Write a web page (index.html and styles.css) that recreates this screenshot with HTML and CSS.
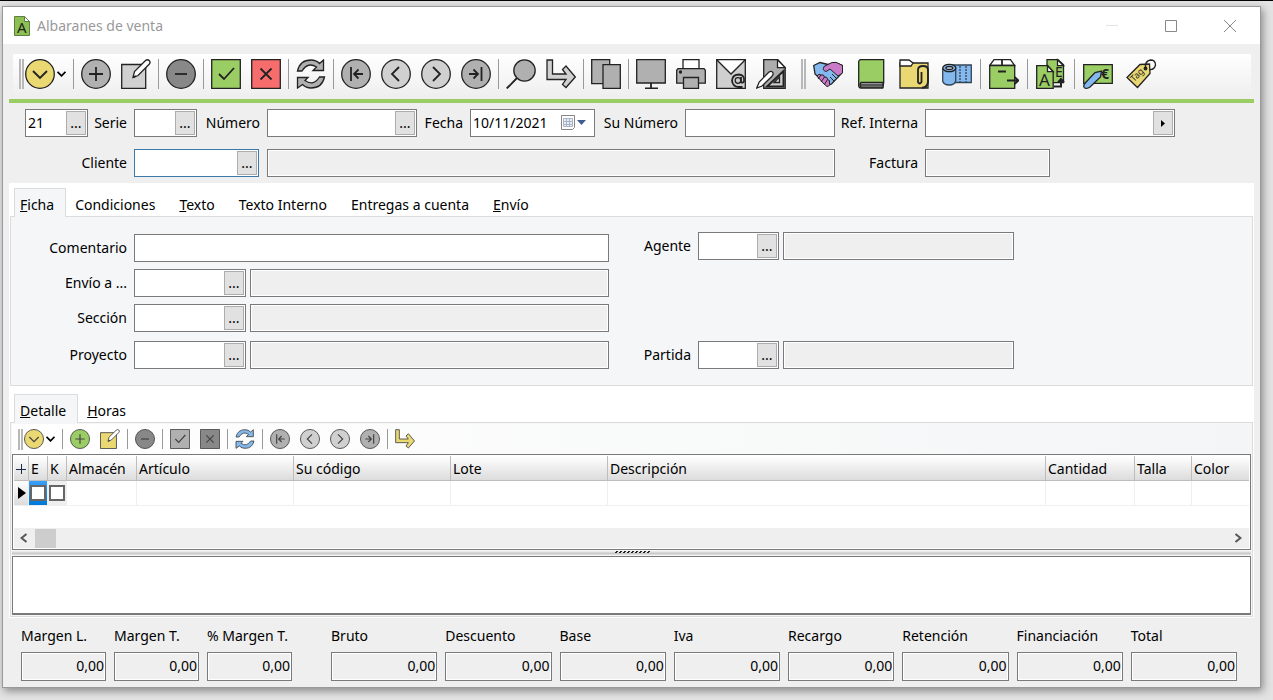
FILE: index.html
```html
<!DOCTYPE html>
<html lang="es">
<head>
<meta charset="utf-8">
<title>Albaranes de venta</title>
<link rel="stylesheet" href="styles.css">
</head>
<body>
<svg class="defs" aria-hidden="true">
  <symbol id="i-menu" viewBox="0 0 30 30"><circle class="f" cx="15" cy="15" r="14.3"/><path class="n" d="M8 12l7 7 7-7"/></symbol>
  <symbol id="i-plus" viewBox="0 0 30 30"><circle class="f" cx="15" cy="15" r="14.3"/><path class="n" d="M8 15h14M15 8v14"/></symbol>
  <symbol id="i-minus" viewBox="0 0 30 30"><circle class="f" cx="15" cy="15" r="14.3"/><path class="n" d="M9 15h12"/></symbol>
  <symbol id="i-edit" viewBox="0 0 30 30"><path class="f" d="M.7 5.500h24v23.800H.7z"/><path d="M12 18.500l1.500-6L24.500 1.500q2-1.500 3.700 0 1.700 1.800 0 3.800L17 16.500z" fill="#fff"/><path class="n" d="M12 18.500l3-1.500"/></symbol>
  <symbol id="i-check" viewBox="0 0 30 30"><path class="f" d="M.7.7h28.600v28.600H.7z"/><path class="n" d="M8 15l5 5 10-11"/></symbol>
  <symbol id="i-x" viewBox="0 0 30 30"><path class="f" d="M.7.7h28.600v28.600H.7z"/><path class="n" d="M9.500 9.500l11 11M20.500 9.500l-11 11"/></symbol>
  <symbol id="i-refresh" viewBox="0 0 30 30"><path class="f" d="M1.500 12Q4 1 15 1q5 0 8.500 3.500L27.500 1v10.500H17L20.500 8Q12 2.500 6 12z"/><path class="f" d="M28.500 18Q26 29 15 29q-5 0-8.500-3.500L1.500 29V18.500H12L9 21.500q8.500 6 14.500-3.500z"/></symbol>
  <symbol id="i-first" viewBox="0 0 30 30"><circle class="f" cx="15" cy="15" r="14.3"/><path class="n" d="M10 8v14M22 15h-9M17.500 10.500L13 15l4.500 4.500"/></symbol>
  <symbol id="i-prev" viewBox="0 0 30 30"><circle class="f" cx="15" cy="15" r="14.3"/><path class="n" d="M18 8l-7 7 7 7"/></symbol>
  <symbol id="i-next" viewBox="0 0 30 30"><circle class="f" cx="15" cy="15" r="14.3"/><path class="n" d="M12 8l7 7-7 7"/></symbol>
  <symbol id="i-last" viewBox="0 0 30 30"><circle class="f" cx="15" cy="15" r="14.3"/><path class="n" d="M20.500 8v14M8 15h9M12.500 10.500L17 15l-4.500 4.500"/></symbol>
  <symbol id="i-search" viewBox="0 0 30 30"><path class="n" d="M.7 29.500L11 19"/><circle class="f" cx="18.500" cy="11.500" r="10.700"/></symbol>
  <symbol id="i-goto" viewBox="0 0 30 30"><path class="f" d="M1 1h5.500v14H20l-3.500-4.500L20 7l9.300 11L20 28.500l-3.500-3L20 20.500H1z"/></symbol>
  <symbol id="i-copy" viewBox="0 0 30 30"><path class="f" d="M.7.700h18v24H.7z"/><path class="f" d="M12 5.700h17.300v23.600H12z"/></symbol>
  <symbol id="i-screen" viewBox="0 0 30 30"><path class="f" d="M.7.700h28.600V24H.7z"/><path class="n" d="M15 24v5.300M9 29.300h13"/></symbol>
  <symbol id="i-print" viewBox="0 0 30 30"><path d="M7 .7h16V11H7z" fill="#fff"/><path class="f" d="M2 9.700h26l1.300 1.500v13H.7v-13z"/><path class="f" d="M7.500 18.500h15v10.800h-15z"/><circle cx="4.500" cy="13" r="1"/></symbol>
  <symbol id="i-mail" viewBox="0 0 30 30"><path d="M.7.700h28.600v28.600H.7z" fill="#cfcfcf"/><path d="M.7.700L15 15 29.300.7z" fill="#fff"/><circle cx="22" cy="21.500" r="2.800" fill="none"/><path class="n" d="M25 18v5q1.500 1.500 3-.5Q29 16 23 15.500q-6.500 0-7 6 .5 6 6.500 6.500h4"/></symbol>
  <symbol id="i-design" viewBox="0 0 30 30"><path d="M7.700.7h14l7.500 8v20.600H7.700z" fill="#acacac"/><path d="M21.500.7v8h7.800z" fill="#fff"/><path d="M11 27.500h16.500V12z" fill="#ccc" stroke-width="2"/><path d="M18 23.500h5.500V18z" fill="#ddd"/><path d="M.7 29l2.500-6L13 13q2.500-1.500 3.800.5 1 2-1 4L6 27z" fill="#fff"/></symbol>
  <symbol id="i-hands" viewBox="0 0 30 30"><path d="M.7 6.500L7 3.500l8 2 7-2 7.500 3-1 8-10 10.500-4 1.500L2 15z" fill="#84b9ef"/><path d="M11 7.500l8-4h4.500l6 3v7.500l-4.500 3-8-7-4 2.500q-4-1-2-5zM4 17q2-3 4-1 3-1 3.500 2 3-.5 3 2.500 3 .5 2 3.500 1 3-2.500 3.500L10 24z" fill="#c97bc9" stroke-width="1"/><path d="M5 20l3-4M8 23l3.500-5M11.500 25.500l3-5M19 15l5 5M17 18l4 4" fill="none" stroke-width="1"/></symbol>
  <symbol id="i-book" viewBox="0 0 30 30"><path d="M2.700 27V3q0-2.500 3-2.500h22v23l-1 5.500H5q-2.300 0-2.300-2.500z" fill="#9bcd65"/><path d="M5 23.500h22v4.700H5q-2-2 0-4.700z" fill="#bbb"/><path d="M5 26h22" fill="none"/></symbol>
  <symbol id="i-folder" viewBox="0 0 30 30"><path d="M1 4h28v25H1z" fill="#ead873"/><path d="M1 1h9l4 3-2 3H1z" fill="#fff"/><path class="n" d="M22.500 13v10q-2 3-3.500 0V11q0-4 5-4 5 0 5 4v12q-1 6-6 5.500"/></symbol>
  <symbol id="i-roll" viewBox="0 0 30 30"><path d="M9 6h20.300v17.500H12z" fill="#84b9ef" stroke="#345"/><path d="M.7 9.500V22q1 4 6.500 4t6.500-4V9.500z" fill="#84b9ef" stroke="#345"/><ellipse cx="7.300" cy="9" rx="6.500" ry="3.700" fill="#84b9ef"/><ellipse cx="7.300" cy="9" rx="3.500" ry="1.500" fill="#dde"/><path d="M18 7v16M24 7v16" fill="none" stroke="#345" stroke-dasharray="2 1"/></symbol>
  <symbol id="i-box" viewBox="0 0 30 30"><path d="M.7 6.500L5 .7h16.500l4.200 5.800z" fill="#fff"/><path d="M.7 6.500h25v22.800H.7z" fill="#9bcd65"/><path class="n" d="M13 .7v5.800M9 12.500h8M18 21.500h11M25.500 18l4 3.500-4 3.500"/></symbol>
  <symbol id="i-drop" viewBox="0 0 9 6"><path class="n" d="M.5.800l4 4 4-4"/></symbol>
</svg>

<main class="window">
  <header class="titlebar">
    <svg class="doc" viewBox="0 0 16 20"><path d="M.5.500h10l5 5v14H.5z" fill="#8cc152" stroke="#5f7d45"/><path d="M10.500.500v5h5z" fill="#fff" stroke="#5f7d45"/><text x="3" y="17" font-size="15">A</text></svg>
    <h1>Albaranes de venta</h1>
    <div class="controls">
      <button class="plain" aria-label="Minimizar"><svg viewBox="0 0 14 14"><path d="M1 6.500h12" stroke="#e2e2e2" fill="none"/></svg></button>
      <button class="plain" aria-label="Maximizar"><svg viewBox="0 0 14 14"><path d="M1.500 1.500h11v11h-11z" stroke="#888" fill="none"/></svg></button>
      <button class="plain" aria-label="Cerrar"><svg viewBox="0 0 14 14"><path d="M1 1l12 12M13 1L1 13" stroke="#888" fill="none"/></svg></button>
    </div>
  </header>

  <div class="toolbar" role="toolbar" aria-label="Principal">
    <span class="grip"></span>
    <button class="tool yellow" aria-label="Menú"><svg><use href="#i-menu"/></svg></button>
    <button class="drop" aria-label="Opciones"><svg><use href="#i-drop"/></svg></button>
    <span class="sep"></span>
    <button class="tool mid" aria-label="Nuevo"><svg><use href="#i-plus"/></svg></button>
    <button class="tool light" aria-label="Editar"><svg><use href="#i-edit"/></svg></button>
    <span class="sep"></span>
    <button class="tool dark" aria-label="Borrar"><svg><use href="#i-minus"/></svg></button>
    <span class="sep"></span>
    <button class="tool green" aria-label="Aceptar"><svg><use href="#i-check"/></svg></button>
    <button class="tool red" aria-label="Cancelar"><svg><use href="#i-x"/></svg></button>
    <span class="sep"></span>
    <button class="tool mid" aria-label="Refrescar"><svg><use href="#i-refresh"/></svg></button>
    <span class="sep"></span>
    <button class="tool mid" aria-label="Primero"><svg><use href="#i-first"/></svg></button>
    <button class="tool light" aria-label="Anterior"><svg><use href="#i-prev"/></svg></button>
    <button class="tool light" aria-label="Siguiente"><svg><use href="#i-next"/></svg></button>
    <button class="tool mid" aria-label="Último"><svg><use href="#i-last"/></svg></button>
    <span class="sep"></span>
    <button class="tool mid" aria-label="Buscar"><svg><use href="#i-search"/></svg></button>
    <button class="tool light" aria-label="Ir a"><svg><use href="#i-goto"/></svg></button>
    <span class="sep"></span>
    <button class="tool mid" aria-label="Duplicar"><svg><use href="#i-copy"/></svg></button>
    <span class="sep"></span>
    <button class="tool mid" aria-label="Pantalla"><svg><use href="#i-screen"/></svg></button>
    <button class="tool mid" aria-label="Imprimir"><svg><use href="#i-print"/></svg></button>
    <button class="tool" aria-label="Enviar por correo"><svg><use href="#i-mail"/></svg></button>
    <button class="tool" aria-label="Diseñar"><svg><use href="#i-design"/></svg></button>
    <div class="toolgroup">
      <span class="grip"></span>
      <button class="tool" aria-label="Acuerdos"><svg><use href="#i-hands"/></svg></button>
      <button class="tool" aria-label="Libro"><svg><use href="#i-book"/></svg></button>
      <button class="tool" aria-label="Adjuntos"><svg><use href="#i-folder"/></svg></button>
      <button class="tool" aria-label="Trazabilidad"><svg><use href="#i-roll"/></svg></button>
      <span class="sep"></span>
      <button class="tool" aria-label="Servir"><svg><use href="#i-box"/></svg></button>
      <span class="sep"></span>
      <button class="tool" aria-label="Facturar"><svg class="ink" viewBox="0 0 30 30"><path d="M11 .7h11l5.500 5v18H11z" fill="#9bcd65"/><path d="M21.500.7v6h6z" fill="#fff"/><text x="19" y="18" font-size="14">E</text><path d="M.7 6.700h11l5.500 6v16.600H.7z" fill="#9bcd65"/><path d="M11.500 6.700v6h5.700z" fill="#fff"/><text x="3" y="27" font-size="17">A</text><path d="M18 27.500h7V21M22 23.500l3-3.500 3 3.500" fill="none" stroke-width="2"/></svg></button>
      <span class="sep"></span>
      <button class="tool" aria-label="Cobros"><svg class="ink" viewBox="0 0 30 30"><path d="M.7 5.700h28.600v18.600H.7z" fill="#9bcd65"/><text x="18" y="20" font-size="14" font-weight="700">€</text><path d="M.7 27.500q0-2 1.500-3.500L12 13.500l6.500-1.500-1 6L7 28q-2 1.500-4 1.300-2 0-2.300-1.800z" fill="#84b9ef"/></svg></button>
      <button class="tool" aria-label="Etiquetas"><svg class="ink" viewBox="0 0 30 30"><path d="M1 18.500L14 5.500l9.500-.5.500 9.500L11.500 28.500z" fill="#ead873"/><path d="M19.500 9.500q-1-7.500 5-8.500 5 0 5 5-1 5-6 4.500" fill="none"/><circle cx="19.500" cy="9.500" r="1.300" fill="#222"/><text transform="rotate(-45 9 23)" x="8" y="22.500" font-size="9">Tag</text></svg></button>
    </div>
  </div>

  <form class="head">
    <div class="row row-doc">
      <span class="field"><input aria-label="Ejercicio" value="21"><button type="button" class="pick" aria-label="Elegir ejercicio">...</button></span>
      <label for="serie">Serie</label>
      <span class="field"><input id="serie"><button type="button" class="pick" aria-label="Elegir serie">...</button></span>
      <label for="numero">Número</label>
      <span class="field"><input id="numero"><button type="button" class="pick" aria-label="Elegir número">...</button></span>
      <label for="fecha">Fecha</label>
      <span class="field"><input id="fecha" value="10/11/2021"><button type="button" class="cal" aria-label="Calendario"><svg viewBox="0 0 26 16"><path d="M.5.500h13v12l-2 2H.5z" fill="#fff" stroke="#8a8585"/><path d="M2.500 3.500h9v8h-9zM5.500 3.500v8M8.500 3.500v8M2.500 6.500h9M2.500 9.500h9" fill="#e6eef8" stroke="#a9b4c4"/><path d="M16 5h9l-4.500 5z" fill="#3f5c8c"/></svg></button></span>
      <label for="sunumero">Su Número</label>
      <span class="field"><input id="sunumero"></span>
      <label for="ref">Ref. Interna</label>
      <span class="field"><input id="ref"><button type="button" class="pick" aria-label="Ver referencia"><svg class="tri" viewBox="0 0 4 7"><path d="M0 0l4 3.500L0 7z"/></svg></button></span>
    </div>
    <div class="row row-client">
      <label for="cliente">Cliente</label>
      <span class="field focus"><input id="cliente"><button type="button" class="pick" aria-label="Elegir cliente">...</button></span>
      <span class="field ro wide"><input readonly aria-label="Nombre del cliente"></span>
      <label for="factura">Factura</label>
      <span class="field ro"><input id="factura" readonly></span>
    </div>
  </form>

  <div class="pages">
    <div class="tabs" role="tablist">
      <button class="tab active" role="tab"><u>F</u>icha</button>
      <button class="tab" role="tab">Condiciones</button>
      <button class="tab" role="tab"><u>T</u>exto</button>
      <button class="tab" role="tab">Texto Interno</button>
      <button class="tab" role="tab">Entregas a cuenta</button>
      <button class="tab" role="tab"><u>E</u>nvío</button>
    </div>
    <section class="page ficha">
      <div class="col-left">
        <div class="line"><label for="comentario">Comentario</label><span class="field wide"><input id="comentario"></span></div>
        <div class="line"><label for="envio">Envío a ...</label><span class="field code"><input id="envio"><button type="button" class="pick" aria-label="Elegir envío">...</button></span><span class="field ro wide"><input readonly aria-label="Descripción del envío"></span></div>
        <div class="line"><label for="seccion">Sección</label><span class="field code"><input id="seccion"><button type="button" class="pick" aria-label="Elegir sección">...</button></span><span class="field ro wide"><input readonly aria-label="Descripción de la sección"></span></div>
        <div class="line"><label for="proyecto">Proyecto</label><span class="field code"><input id="proyecto"><button type="button" class="pick" aria-label="Elegir proyecto">...</button></span><span class="field ro wide"><input readonly aria-label="Descripción del proyecto"></span></div>
      </div>
      <div class="col-right">
        <div class="line"><label for="agente">Agente</label><span class="field code"><input id="agente"><button type="button" class="pick" aria-label="Elegir agente">...</button></span><span class="field ro wide"><input readonly aria-label="Nombre del agente"></span></div>
        <div class="line"><label for="partida">Partida</label><span class="field code"><input id="partida"><button type="button" class="pick" aria-label="Elegir partida">...</button></span><span class="field ro wide"><input readonly aria-label="Descripción de la partida"></span></div>
      </div>
    </section>

    <div class="tabs" role="tablist">
      <button class="tab active" role="tab"><u>D</u>etalle</button>
      <button class="tab" role="tab"><u>H</u>oras</button>
    </div>
    <section class="page detail">
      <div class="toolbar small" role="toolbar" aria-label="Detalle">
        <span class="grip"></span>
        <button class="tool yellow" aria-label="Menú"><svg><use href="#i-menu"/></svg></button>
        <button class="drop" aria-label="Opciones"><svg><use href="#i-drop"/></svg></button>
        <span class="sep"></span>
        <button class="tool green" aria-label="Nueva línea"><svg><use href="#i-plus"/></svg></button>
        <button class="tool yellow" aria-label="Editar línea"><svg><use href="#i-edit"/></svg></button>
        <span class="sep"></span>
        <button class="tool dark" aria-label="Borrar línea"><svg><use href="#i-minus"/></svg></button>
        <span class="sep"></span>
        <button class="tool mid" aria-label="Aceptar línea"><svg><use href="#i-check"/></svg></button>
        <button class="tool dark" aria-label="Cancelar línea"><svg><use href="#i-x"/></svg></button>
        <span class="sep"></span>
        <button class="tool blue" aria-label="Refrescar líneas"><svg><use href="#i-refresh"/></svg></button>
        <span class="sep"></span>
        <button class="tool mid" aria-label="Primera línea"><svg><use href="#i-first"/></svg></button>
        <button class="tool light" aria-label="Línea anterior"><svg><use href="#i-prev"/></svg></button>
        <button class="tool light" aria-label="Línea siguiente"><svg><use href="#i-next"/></svg></button>
        <button class="tool mid" aria-label="Última línea"><svg><use href="#i-last"/></svg></button>
        <span class="sep"></span>
        <button class="tool yellow" aria-label="Ir a línea"><svg><use href="#i-goto"/></svg></button>
      </div>

      <div class="grid">
        <table>
          <colgroup><col class="c-mark"><col class="c-flag"><col class="c-flag"><col class="c-store"><col class="c-text"><col class="c-text"><col class="c-text"><col><col class="c-qty"><col class="c-attr"><col class="c-attr"></colgroup>
          <thead><tr>
            <th class="mark"><svg viewBox="0 0 10 10"><path d="M0 5.500h10M5.500 0v10" stroke="#1b2a44" fill="none"/></svg></th>
            <th>E</th><th>K</th><th>Almacén</th><th>Artículo</th><th>Su código</th><th>Lote</th><th>Descripción</th><th>Cantidad</th><th>Talla</th><th>Color</th>
          </tr></thead>
          <tbody><tr>
            <td class="mark current"><svg viewBox="0 0 8 12"><path d="M0 0l8 6-8 6z"/></svg></td>
            <td class="flag sel"><input type="checkbox" aria-label="E"></td>
            <td class="flag"><input type="checkbox" aria-label="K"></td>
            <td></td><td></td><td></td><td></td><td></td><td></td><td></td><td></td>
          </tr></tbody>
        </table>
        <div class="scroll">
          <button class="arrow" aria-label="Izquierda"><svg viewBox="0 0 8 10"><path d="M6.500 1l-5 4 5 4" stroke="#555" stroke-width="2" fill="none"/></svg></button>
          <span class="thumb"></span>
          <button class="arrow end" aria-label="Derecha"><svg viewBox="0 0 8 10"><path d="M1.500 1l5 4-5 4" stroke="#555" stroke-width="2" fill="none"/></svg></button>
        </div>
      </div>
      <div class="splitter"><svg viewBox="0 0 36 4"><path d="M1 2.500h35M2 1.500h34" stroke="#222" stroke-dasharray="2 2" fill="none"/></svg></div>
      <textarea class="memo" aria-label="Notas"></textarea>
    </section>
  </div>

  <footer class="totals">
    <label>Margen L.<input readonly value="0,00"></label>
    <label>Margen T.<input readonly value="0,00"></label>
    <label>% Margen T.<input readonly value="0,00"></label>
    <span></span>
    <label>Bruto<input readonly value="0,00"></label>
    <label>Descuento<input readonly value="0,00"></label>
    <label>Base<input readonly value="0,00"></label>
    <label>Iva<input readonly value="0,00"></label>
    <label>Recargo<input readonly value="0,00"></label>
    <label>Retención<input readonly value="0,00"></label>
    <label>Financiación<input readonly value="0,00"></label>
    <label>Total<input readonly value="0,00"></label>
  </footer>
</main>
</body>
</html>
```
FILE: styles.css
```css
* { box-sizing: border-box; }
body {
  margin: 0;
  padding: 5px 12px 11px 2px;
  min-height: 100vh;
  border-top: 1px solid #000;
  background: #e4e3e4;
  color: #000;
  font: 14px/20px "Noto Sans", "Open Sans", sans-serif;
}
button, input, textarea { font: inherit; color: inherit; margin: 0; padding: 0; border: 0; background: none; border-radius: 0; }
input, textarea { outline: 0; min-width: 0; }
svg { display: block; }
.defs { position: absolute; width: 0; height: 0; }
symbol, .ink { stroke: var(--line, #222); stroke-width: 1.3; overflow: visible; }
svg text { fill: #222; stroke: none; font-family: "Noto Sans", sans-serif; }
.f { fill: var(--fill, #b3b3b3); }
.n { fill: none; stroke-width: 1.8; }

.window {
  border: 1px solid #999;
  background: #efefef;
  box-shadow: 2px 3px 8px #0006;
}
.titlebar { display: flex; align-items: center; height: 37px; padding-left: 11px; background: #fff; }
.doc { width: 16px; height: 20px; }
.titlebar h1 { margin: 0 0 0 7px; font-size: 14px; font-weight: 400; color: #999; }
.controls { display: flex; gap: 44px; margin-left: auto; padding-right: 22px; }
.controls svg { width: 14px; height: 14px; }
.controls .plain { width: 15px; }

.toolbar {
  display: flex;
  align-items: center;
  height: 42px;
  margin: 10px 9px 3px 10px;
  padding: 0 0 2px 6px;
  background: linear-gradient(#fff, #efefef);
}
.tool { flex: none; width: 30px; height: 30px; }
.tool svg { width: 100%; height: 100%; }
.tool + .tool { margin-left: 10px; }
.sep { flex: none; width: 1px; height: 30px; margin: 0 7px; background: #999; }
.grip { flex: none; width: 5px; height: 30px; margin-right: 1px; border: solid #b8b8b8; border-width: 0 2px; }
.drop { --line: #000; width: 9px; margin-left: 2px; }
.drop svg { width: 9px; height: 6px; }
.toolgroup { display: flex; align-items: center; margin-left: 15px; }
.toolgroup .grip { margin-right: 7px; }
.toolgroup .tool + .tool { margin-left: 13px; }
.toolgroup .sep { margin: 0 8px; }
.yellow { --fill: #ead873; }
.mid { --fill: #b0b0b0; }
.light { --fill: #d0d0d0; }
.dark { --fill: #888; }
.green { --fill: #9bcd65; }
.red { --fill: #f76c6c; }
.blue { --fill: #84b9ef; }

.head { margin: 0 6px; padding: 6px 79px 6px 16px; border-top: 4px solid #9bcd65; }
.row { display: grid; align-items: center; }
.row-doc { grid-template-columns: 63px 46px 63px 70px minmax(0, 3fr) 53px 125px 90px minmax(0, 3fr) 90px minmax(0, 5fr); }
.row-client { grid-template-columns: 109px 125px minmax(0, 1fr) 90px 250px; margin-top: 12px; }
.row-client .wide { margin-left: 8px; }
.row-client .field:last-child { width: 125px; }
.row label, .line label { text-align: right; padding-right: 7px; white-space: nowrap; }
.field { display: flex; height: 28px; padding: 1px; border: 1px solid #7a7a7a; background: #fff; }
.field input { flex: 1; width: 0; padding-left: 1px; }
.field.focus { border-color: #3c78a8; }
.ro input { background: #efefef; }
.pick { display: flex; align-items: center; justify-content: center; width: 20px; border: 1px solid #adadad; background: #e1e1e1; }
.tri { width: 4px; height: 7px; }
.cal { width: 32px; }
.cal svg { width: 26px; height: 16px; }

.pages { margin: 0 6px; padding: 5px 1px 1px; background: #fff; }
.tabs { display: flex; padding-left: 4px; height: 28px; }
.tab { height: 28px; padding: 5px 12px 0; white-space: nowrap; }
.tab.active { height: 29px; padding: 4px 11px 0 5px; margin-right: -3px; border: 1px solid #dcdcdc; border-bottom: 0; background: #f4f6f8; z-index: 1; }
.page { border: 1px solid #dcdcdc; background: #f4f6f8; }
.ficha { display: grid; grid-template-columns: 598px minmax(0, 405px); padding: 15px 0 16px; margin-bottom: 8px; }
.line { display: flex; align-items: center; }
.line .wide { flex: 1; min-width: 0; }
.code + .wide { margin-left: 4px; }
.col-left { display: grid; gap: 7px; padding-top: 2px; }
.col-left .line:last-child { padding-top: 2px; }
.col-left label { width: 123px; }
.col-left .code { width: 112px; }
.col-right { display: flex; flex-direction: column; justify-content: space-between; }
.col-right label { width: 89px; }
.col-right .code { width: 81px; }

.detail { padding: 1px; }
.toolbar.small { height: 30px; margin: 0; padding: 0 0 0 6px; background: linear-gradient(90deg, #fff, #f4f5f6); }
.small .tool { --line: #444; width: 20px; height: 20px; }
.small .sep { height: 20px; }
.small .grip { height: 21px; }
.grid { padding: 1px; border: 1px solid #7a7a7a; background: #fff; }
table { width: 100%; table-layout: fixed; border-collapse: separate; border-spacing: 0; }
th, td { height: 25px; padding: 0 0 0 2px; border-right: 1px solid #efefef; border-bottom: 1px solid #efefef; text-align: left; font-weight: 400; white-space: nowrap; }
th { padding-top: 2px; border-color: #bdbdbd; background: linear-gradient(#fff, #dcdcdc); }
th:last-child, td:last-child { border-right: 0; }
.c-mark { width: 15px; }
.c-flag { width: 19px; }
.c-store { width: 70px; }
.c-text { width: 157px; }
.c-qty { width: 89px; }
.c-attr { width: 57px; }
.mark svg { width: 10px; height: 10px; }
.current { padding-left: 4px; background: linear-gradient(#fff, #dcdcdc); }
.current svg { width: 8px; height: 12px; }
.flag { padding: 0 0 0 1px; background: #efefef; }
.flag.sel { background: linear-gradient(#3aa0fa, #0078d7); }
.flag input { display: block; appearance: none; width: 16px; height: 16px; border: 2px solid #666; background: #fff; }
.scroll { display: flex; align-items: center; height: 20px; margin-top: 22px; background: #efefef; }
.arrow { width: 21px; padding-left: 6px; }
.arrow svg { width: 8px; height: 10px; }
.arrow.end { margin-left: auto; }
.thumb { width: 21px; height: 19px; background: #cdcdcd; }
.splitter { display: flex; justify-content: center; height: 6px; background: linear-gradient(#fff, #c8c8c8 60%, #fff); }
.splitter svg { width: 36px; height: 4px; }
.memo { display: block; width: 100%; height: 59px; border: 1px solid #7a7a7a; border-bottom-width: 2px; background: #fff; resize: none; }

.totals { display: grid; grid-template-columns: 85px 85px 85px 23px repeat(8, minmax(0, 1fr)); column-gap: 8px; padding: 8px 23px 6px 18px; }
.totals label { display: grid; gap: 6px; white-space: nowrap; }
.totals input { width: 100%; height: 29px; padding: 0 1px 2px 0; border: 1px solid #7a7a7a; background: #efefef; box-shadow: inset 0 0 0 1px #fff; text-align: right; }
```
